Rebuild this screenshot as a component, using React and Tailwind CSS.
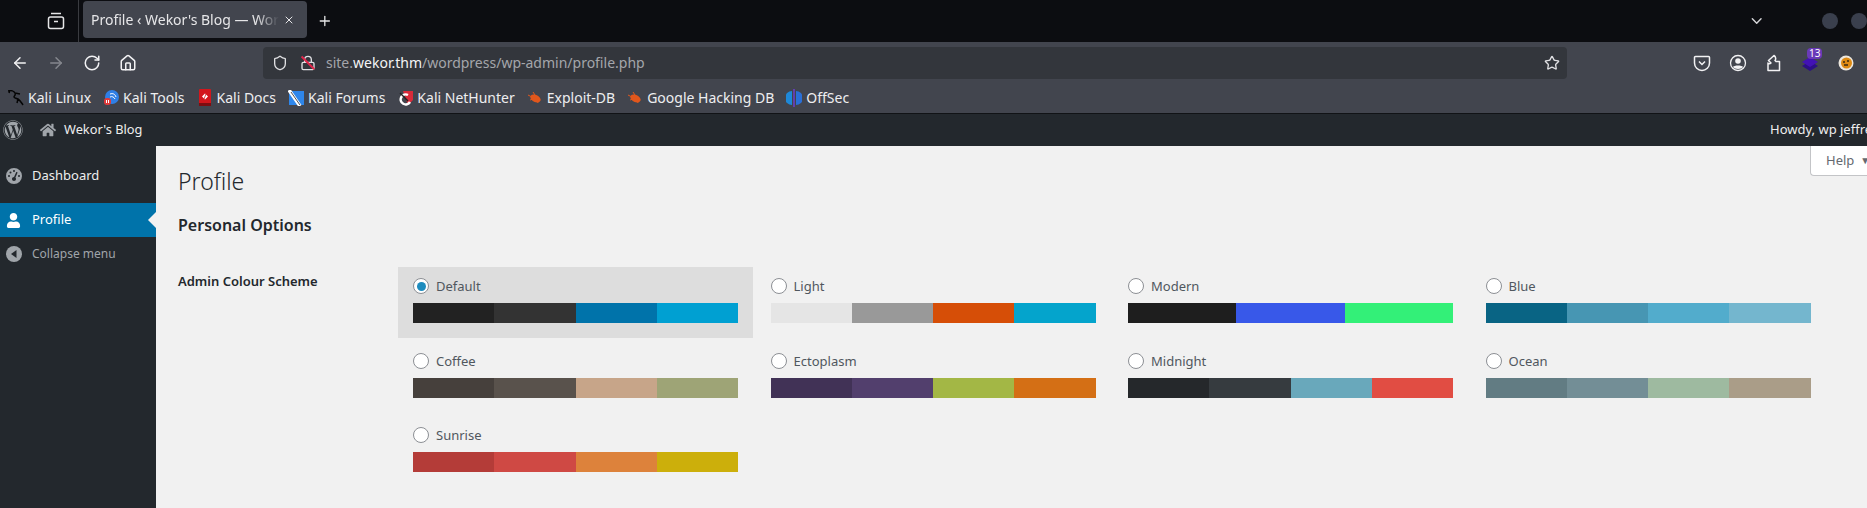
import React from 'react';
import { ArrowLeft, ArrowRight, RotateCw, Home, Shield, Lock, Star, ChevronDown, Plus, X } from 'lucide-react';
import { FaWordpress, FaHome, FaUser } from 'react-icons/fa';
import { FaGaugeHigh } from 'react-icons/fa6';

const schemes = [
  { name: 'Default', colors: ['#222222', '#333333', '#0073aa', '#00a0d2'], selected: true },
  { name: 'Light', colors: ['#e5e5e5', '#999999', '#d64e07', '#04a4cc'] },
  { name: 'Modern', colors: ['#1e1e1e', '#3858e9', '#33f078'] },
  { name: 'Blue', colors: ['#096484', '#4796b3', '#52accc', '#74b6ce'] },
  { name: 'Coffee', colors: ['#46403c', '#59524c', '#c7a589', '#9ea476'] },
  { name: 'Ectoplasm', colors: ['#413256', '#523f6d', '#a3b745', '#d46f15'] },
  { name: 'Midnight', colors: ['#25282b', '#363b3f', '#69a8bb', '#e14d43'] },
  { name: 'Ocean', colors: ['#627c83', '#738e96', '#9ebaa0', '#aa9d88'] },
  { name: 'Sunrise', colors: ['#b43c38', '#cf4944', '#dd823b', '#ccaf0b'] },
];

function KaliIcon() {
  return (
    <svg width="16" height="16" viewBox="0 0 16 16" fill="none" stroke="#050505" strokeWidth="1.5">
      <path d="M0 1c3-1 6 0 7 2 1 2-1 3-1 4s2 1 4 2 3 3 5 6M7 3l5 1M2 0L1 3M10 9l-1 4" />
    </svg>
  );
}

function ToolsIcon() {
  return (
    <svg width="16" height="16" viewBox="0 0 16 16">
      <circle cx="9" cy="7" r="7" fill="#2f7fe6" />
      <path d="M7 4c3-1 5 0 6 3M7 7c2-1 4 0 5 2" stroke="#fff" strokeWidth="1" fill="none" />
      <rect x="1" y="8" width="7" height="7" rx="3" fill="#e03a3a" />
      <path d="M3.5 10v3M5.5 10v3" stroke="#fff" strokeWidth="1" />
    </svg>
  );
}

function DocsIcon() {
  return (
    <svg width="16" height="17" viewBox="0 0 16 17">
      <rect x="2" y="0" width="12" height="15" rx="1" fill="#d3161c" />
      <rect x="2" y="14" width="12" height="3" fill="#7d0d10" />
      <path d="M8 4.500l3 3-3 3-3-3z" fill="#fff" />
      <path d="M9 5l-2 5" stroke="#d3161c" strokeWidth="0.8" />
    </svg>
  );
}

function ForumsIcon() {
  return (
    <svg width="16" height="16" viewBox="0 0 16 16">
      <rect x="1" y="1" width="15" height="14" fill="#2e86ea" />
      <path d="M1 0l11 16" stroke="#fff" strokeWidth="3.500" />
      <path d="M3 2l9 13" stroke="#222" strokeWidth="0.8" />
    </svg>
  );
}

function HunterIcon() {
  return (
    <svg width="16" height="16" viewBox="0 0 16 16">
      <path d="M6 1h10v9l-5 5z" fill="#d92b3a" />
      <path d="M13 12a5 5 0 1 1-2-7" fill="none" stroke="#fff" strokeWidth="2.500" />
      <path d="M3 3l8 8" stroke="#222" strokeWidth="1.500" />
    </svg>
  );
}

function BugIcon() {
  return (
    <svg width="16" height="16" viewBox="0 0 16 16" fill="#e2571c">
      <ellipse cx="8.5" cy="8.5" rx="5.5" ry="3.5" transform="rotate(25 8.5 8.5)" />
      <path d="M1 5l4 2M3 10l3-1M6 2l2 3M11 13l-1-3" stroke="#e2571c" strokeWidth="1" />
    </svg>
  );
}

function OffSecIcon() {
  return (
    <svg width="16" height="18" viewBox="0 0 16 18">
      <path d="M6 2a7 7 0 0 0 0 14z" fill="#1e88d8" />
      <path d="M10 2a7 7 0 0 1 0 14z" fill="#2a6fd6" />
      <rect x="7.2" y="0" width="1.6" height="18" fill="#6a3fc8" />
    </svg>
  );
}

const bookmarks = [
  { label: 'Kali Linux', Icon: KaliIcon },
  { label: 'Kali Tools', Icon: ToolsIcon },
  { label: 'Kali Docs', Icon: DocsIcon },
  { label: 'Kali Forums', Icon: ForumsIcon },
  { label: 'Kali NetHunter', Icon: HunterIcon },
  { label: 'Exploit-DB', Icon: BugIcon },
  { label: 'Google Hacking DB', Icon: BugIcon },
  { label: 'OffSec', Icon: OffSecIcon },
];

function ColorOption({ name, colors, selected }) {
  return (
    <div className={`h-[71px] px-[15px] pt-[11px] ${selected ? 'bg-[#dddddd]' : ''}`}>
      <div className="flex h-4 items-center gap-[7px]">
        <span className="flex h-4 w-4 items-center justify-center rounded-full border border-[#8c8f94] bg-white">
          {selected && <span className="h-[9px] w-[9px] rounded-full bg-[#1e8cbe]" />}
        </span>
        <span className="pt-[2px] text-[13px] text-[#50575e]">{name}</span>
      </div>
      <div className="mt-[9px] flex h-5">
        {colors.map((c) => (
          <div key={c} className="flex-1" style={{ backgroundColor: c }} />
        ))}
      </div>
    </div>
  );
}

export default function App() {
  return (
    <div className="flex h-screen w-full flex-col overflow-hidden font-['Noto_Sans',sans-serif]">
      {/* tab strip */}
      <div className="flex h-[42px] shrink-0 items-center bg-[#0c0d11] text-[#e6e6e8]">
        <div className="ml-[47px] flex h-[42px] items-center border-r border-[#3a3b40] pr-[13px]">
          <svg width="18" height="18" viewBox="0 0 18 18" fill="none" stroke="#e6e6e8" strokeWidth="1.5">
            <rect x="1.5" y="5" width="15" height="11.5" rx="2" />
            <path d="M4 1.5h10M7 9.5h4" />
          </svg>
        </div>
        <div className="ml-1 mt-px flex h-[37px] w-[224px] items-center self-start rounded bg-[#42454e] pl-2 pr-3">
          <span className="flex-1 overflow-hidden whitespace-nowrap text-sm [mask-image:linear-gradient(90deg,#000_88%,transparent)]">
            Profile ‹ Wekor's Blog — WordPress
          </span>
          <X size={12} className="ml-1 shrink-0" />
        </div>
        <Plus size={18} className="ml-[10px]" />
        <ChevronDown size={20} className="ml-[1415px] text-[#d5d5d8]" />
        <span className="ml-[57px] h-4 w-4 shrink-0 rounded-full bg-[#3a3f4d]" />
        <span className="ml-[13px] h-4 w-4 shrink-0 rounded-full bg-[#3a3f4d]" />
      </div>

      {/* toolbar */}
      <div className="flex h-10 shrink-0 items-center bg-[#42454e] pl-[11px] text-[#f2f2f4]">
        <div className="mt-[2px] flex items-center gap-[18px]">
          <ArrowLeft size={18} />
          <ArrowRight size={18} className="text-[#85878e]" />
          <RotateCw size={18} />
          <Home size={18} />
        </div>
        <div className="ml-[126px] mt-[2px] flex h-8 w-[1304px] items-center rounded bg-[#33363c] pl-[9px] pr-[7px] text-sm text-[#a4a6ab]">
          <Shield size={16} className="text-[#e0e0e3]" />
          <span className="relative ml-3 flex">
            <Lock size={16} className="text-[#e0e0e3]" />
            <span className="absolute left-[7px] top-[-1px] h-[18px] w-[1.5px] -rotate-45 bg-[#e0264a]" />
          </span>
          <span className="ml-[10px] flex-1">
            site.<span className="text-[#f4f4f5]">wekor.thm</span>/wordpress/wp-admin/profile.php
          </span>
          <Star size={16} className="text-[#e0e0e3]" />
        </div>
        <div className="ml-[126px] mt-[2px] flex items-center gap-[18px]">
          <svg width="18" height="18" viewBox="0 0 18 18" fill="none" stroke="#f2f2f4" strokeWidth="1.5">
            <path d="M2.5 2.5h13a1 1 0 0 1 1 1V9a7.5 7.5 0 0 1-15 0V3.500a1 1 0 0 1 1-1z" />
            <path d="M6 7.500l3 3 3-3" />
          </svg>
          <svg width="18" height="18" viewBox="0 0 18 18">
            <circle cx="9" cy="9" r="7.500" fill="none" stroke="#f2f2f4" strokeWidth="1.300" />
            <circle cx="9" cy="7" r="2.800" fill="#f2f2f4" />
            <path d="M4 13c1-2 9-2 10 0-1.500 2.500-8.500 2.500-10 0z" fill="#f2f2f4" />
          </svg>
          <svg width="18" height="18" viewBox="0 0 18 18" fill="none" stroke="#f2f2f4" strokeWidth="1.500">
            <path d="M3 16.500h11.500v-9H11l-1-1c1-1 1-4-1-5L3.500 6.500 6 9c-1 1-2.500 1-3 0z" strokeLinejoin="round" />
          </svg>
          <span className="relative flex w-[18px] justify-center">
            <svg width="18" height="18" viewBox="0 0 18 18">
              <path d="M9 7l8 5-8 5-8-5z" fill="#2c0f86" />
              <path d="M9 3l8 5-8 5-8-5z" fill="#4212b4" />
            </svg>
            <span className="absolute left-[6px] top-[-6px] rounded-sm bg-[#6a3ab8] px-[2px] text-[10px] leading-[11px] text-white">13</span>
          </span>
          <svg width="18" height="18" viewBox="0 0 18 18">
            <circle cx="9" cy="9" r="7.500" fill="#ece6dc" />
            <circle cx="9.500" cy="9" r="5.500" fill="#df8a12" />
            <path d="M6 8h2M10 7h2M7 11h4" stroke="#3b2a12" strokeWidth="1.400" />
          </svg>
        </div>
      </div>

      {/* bookmarks */}
      <div className="flex h-[31px] shrink-0 items-center gap-[12px] bg-[#42454e] pl-[8px] text-sm text-[#eeeef0]">
        {bookmarks.map(({ label, Icon }) => (
          <div key={label} className="flex items-center gap-[4px] whitespace-nowrap">
            <Icon />
            <span>{label}</span>
          </div>
        ))}
      </div>

      {/* wp admin bar */}
      <div className="flex h-[33px] shrink-0 items-center border-t border-[#111316] bg-[#23282d] text-[13px] text-[#eeeeee]">
        <FaWordpress size={20} className="ml-[3px] text-[#a0a5aa]" />
        <FaHome size={16} className="ml-[17px] text-[#a0a5aa]" />
        <span className="ml-[8px] text-[12.8px]">Wekor's Blog</span>
        <span className="ml-auto w-[97px] overflow-hidden whitespace-nowrap">Howdy, wp jeffrey</span>
      </div>

      <div className="flex min-h-0 flex-1">
        {/* sidebar */}
        <aside className="w-[156px] shrink-0 bg-[#23282d] pt-[13px] text-[13px] text-[#eeeeee]">
          <div className="flex h-[34px] items-center pl-[6px]">
            <FaGaugeHigh size={16} className="text-[#a0a5aa]" />
            <span className="ml-[10px]">Dashboard</span>
          </div>
          <div className="mt-[10px] flex h-[34px] items-center bg-[#0073aa] pl-[6px] text-white">
            <FaUser size={15} />
            <span className="ml-[11px]">Profile</span>
            <span className="ml-auto h-0 w-0 border-y-[8px] border-r-[8px] border-y-transparent border-r-[#f1f1f1]" />
          </div>
          <div className="mt-[3px] flex h-[27px] items-center pl-[6px] text-xs text-[#a0a5aa]">
            <svg width="16" height="16" viewBox="0 0 16 16">
              <circle cx="8" cy="8" r="8" fill="#a0a5aa" />
              <path d="M10.500 4v8L5 8z" fill="#23282d" />
            </svg>
            <span className="ml-[10px]">Collapse menu</span>
          </div>
        </aside>

        {/* main content */}
        <main className="min-w-0 flex-1 bg-[#f1f1f1] pl-[22px] text-[#23282d]">
          <div className="flex items-start justify-between">
            <h1 className="pt-[19px] text-[23px] leading-[32px] font-light">Profile</h1>
            <div className="flex h-[30px] w-[57px] items-center rounded-bl border border-t-0 border-r-0 border-[#c3c4c7] bg-white pl-[15px] text-[13px] whitespace-nowrap text-[#646970]">
              Help <span className="ml-[6px] text-[10px]">▼</span>
            </div>
          </div>
          <h2 className="mt-[16px] text-base leading-[24px] font-semibold">Personal Options</h2>
          <div className="mt-[30px] flex items-start">
            <div className="w-[220px] shrink-0 pt-[4px] text-[13px] leading-[20px] font-semibold">Admin Colour Scheme</div>
            <div className="grid grid-cols-[repeat(4,355px)] gap-x-[2.5px] gap-y-[3.500px]">
              {schemes.map((s) => (
                <ColorOption key={s.name} {...s} />
              ))}
            </div>
          </div>
        </main>
      </div>
    </div>
  );
}
